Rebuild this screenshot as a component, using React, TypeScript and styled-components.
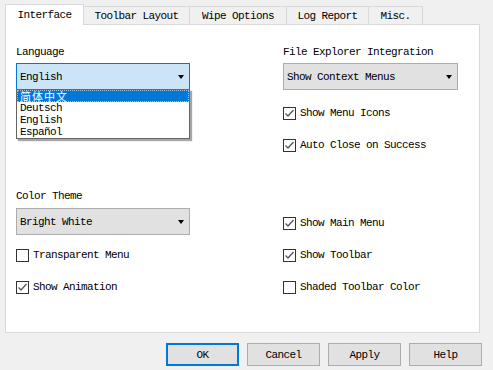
import React from 'react';
import styled, { createGlobalStyle } from 'styled-components';

const GlobalStyle = createGlobalStyle`
  html, body {
    margin: 0;
    padding: 0;
    background: #f0f0f0;
  }
  body {
    font-family: "Liberation Mono", "Noto Sans CJK SC", monospace;
    font-size: 11px;
    letter-spacing: -0.6px;
    color: #000;
  }
`;

const Window = styled.div`
  width: 493px;
  height: 370px;
  box-sizing: border-box;
  padding: 4px 13px 0 5px;
  display: flex;
  flex-direction: column;
`;

const TabBar = styled.div`
  display: flex;
  align-items: flex-end;
  height: 21px;
  margin-bottom: -1px;
  position: relative;
  z-index: 1;
`;

const Tab = styled.div<{ $active?: boolean; $width: number }>`
  width: ${p => p.$width}px;
  box-sizing: border-box;
  height: ${p => (p.$active ? 21 : 18)}px;
  margin-bottom: ${p => (p.$active ? 0 : 1)}px;
  margin-left: ${p => (p.$active ? 0 : -1)}px;
  border: 1px solid #d9d9d9;
  border-bottom: none;
  background: ${p => (p.$active ? '#fff' : '#f0f0f0')};
  display: flex;
  align-items: center;
  justify-content: center;
  line-height: 12px;
  white-space: nowrap;
  &:first-child {
    margin-left: 0;
  }
`;

const Panel = styled.div`
  height: 309px;
  box-sizing: border-box;
  background: #fff;
  border: 1px solid #d9d9d9;
  padding: 21px 0 0 10px;
  display: flex;
  gap: 93px;
`;

const Column = styled.div<{ $width: number }>`
  width: ${p => p.$width}px;
  display: flex;
  flex-direction: column;
`;

const Label = styled.div<{ $top?: number }>`
  line-height: 12px;
  margin-top: ${p => p.$top ?? 0}px;
  white-space: nowrap;
`;

const Select = styled.div<{ $focused?: boolean; $top: number }>`
  position: relative;
  height: 27px;
  box-sizing: border-box;
  margin-top: ${p => p.$top}px;
  border: 1px solid ${p => (p.$focused ? '#0078d7' : '#adadad')};
  background: ${p => (p.$focused ? '#cce4f7' : '#e1e1e1')};
  display: flex;
  align-items: center;
  justify-content: space-between;
  padding: 0 5px 0 3px;
  line-height: 12px;
`;

const Arrow = styled.span`
  width: 0;
  height: 0;
  border-top: 4px solid #000;
  border-left: 3.5px solid transparent;
  border-right: 3.5px solid transparent;
`;

const DropList = styled.div`
  position: absolute;
  top: 100%;
  left: -1px;
  right: -1px;
  background: #fff;
  border: 1px solid #646464;
  box-shadow: 2px 2px 1px rgba(0, 0, 0, 0.35);
  z-index: 5;
`;

const DropItem = styled.div<{ $selected?: boolean }>`
  height: 12px;
  line-height: 12px;
  padding-left: 3px;
  box-sizing: border-box;
  white-space: nowrap;
  background: ${p => (p.$selected ? '#0078d7' : 'transparent')};
  color: ${p => (p.$selected ? '#fff' : '#000')};
  outline: ${p => (p.$selected ? '1px dotted #a8c8e8' : 'none')};
  outline-offset: -1px;
`;

const Cjk = styled.span`
  font-family: "Noto Sans CJK SC", sans-serif;
  font-size: 11px;
  letter-spacing: 1px;
  line-height: 12px;
`;

const OptionRow = styled.div<{ $top: number }>`
  display: flex;
  align-items: center;
  gap: 4px;
  height: 16px;
  margin-top: ${p => p.$top}px;
  white-space: nowrap;
`;

const Box = styled.span`
  width: 13px;
  height: 13px;
  box-sizing: border-box;
  border: 1px solid #333;
  background: #fff;
  display: inline-flex;
  align-items: center;
  justify-content: center;
  flex-shrink: 0;
`;

const Footer = styled.div`
  display: flex;
  justify-content: flex-end;
  gap: 8px;
  margin-top: 10px;
  margin-right: -2px;
`;

const Button = styled.button<{ $primary?: boolean }>`
  width: 73px;
  height: 23px;
  box-sizing: border-box;
  background: #e1e1e1;
  border: ${p => (p.$primary ? '2px solid #0078d7' : '1px solid #adadad')};
  font-family: inherit;
  font-size: 11px;
  letter-spacing: -0.6px;
  color: #000;
  padding: 0;
`;

const Check = ({ checked, label, top }: { checked: boolean; label: string; top: number }) => (
  <OptionRow $top={top}>
    <Box>
      {checked && (
        <svg width="11" height="11" viewBox="0 0 11 11">
          <polyline points="1.5,5.5 4,8 9.5,2" fill="none" stroke="#555" strokeWidth="1.3" />
        </svg>
      )}
    </Box>
    <span>{label}</span>
  </OptionRow>
);

const tabs = [
  { name: 'Interface', width: 79 },
  { name: 'Toolbar Layout', width: 107 },
  { name: 'Wipe Options', width: 98 },
  { name: 'Log Report', width: 83 },
  { name: 'Misc.', width: 55 },
];

export default function App() {
  return (
    <>
      <GlobalStyle />
      <Window>
        <TabBar>
          {tabs.map((t, i) => (
            <Tab key={t.name} $active={i === 0} $width={t.width}>
              {t.name}
            </Tab>
          ))}
        </TabBar>
        <Panel>
          <Column $width={174}>
            <Label>Language</Label>
            <Select $focused $top={5}>
              <span>English</span>
              <Arrow />
              <DropList>
                <DropItem $selected>
                  <Cjk>简体中文</Cjk>
                </DropItem>
                <DropItem>Deutsch</DropItem>
                <DropItem>English</DropItem>
                <DropItem>Español</DropItem>
              </DropList>
            </Select>
            <Label $top={100}>Color Theme</Label>
            <Select $top={6}>
              <span>Bright White</span>
              <Arrow />
            </Select>
            <Check checked={false} label="Transparent Menu" top={12} />
            <Check checked label="Show Animation" top={16} />
          </Column>
          <Column $width={175}>
            <Label>File Explorer Integration</Label>
            <Select $top={5}>
              <span>Show Context Menus</span>
              <Arrow />
            </Select>
            <Check checked label="Show Menu Icons" top={15} />
            <Check checked label="Auto Close on Success" top={16} />
            <Check checked label="Show Main Menu" top={62} />
            <Check checked label="Show Toolbar" top={16} />
            <Check checked={false} label="Shaded Toolbar Color" top={16} />
          </Column>
        </Panel>
        <Footer>
          <Button $primary>OK</Button>
          <Button>Cancel</Button>
          <Button>Apply</Button>
          <Button>Help</Button>
        </Footer>
      </Window>
    </>
  );
}
